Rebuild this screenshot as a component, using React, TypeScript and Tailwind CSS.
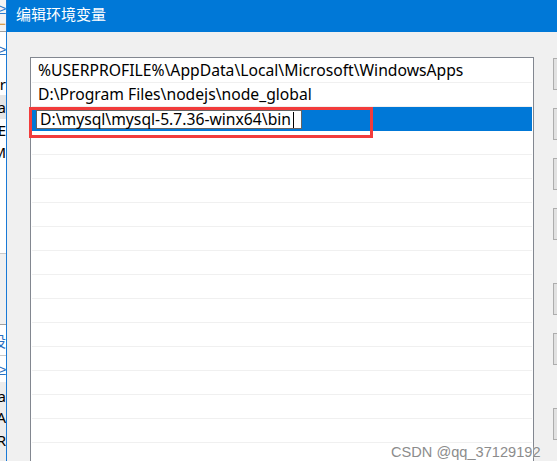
import React from 'react';

const rows = [
  '%USERPROFILE%\\AppData\\Local\\Microsoft\\WindowsApps',
  'D:\\Program Files\\nodejs\\node_global',
];

const emptyRows = Array.from({ length: 14 });

function LeftEdge() {
  // slice of the window behind the dialog
  return (
    <div className="w-[6px] shrink-0 overflow-hidden flex flex-col bg-white text-[15px] leading-none font-['Noto_Sans',sans-serif] text-black">
      <div className="h-[31px] bg-[#f3f3f3] flex flex-col justify-center items-end">
        <span className="text-[#2a7bd0] whitespace-nowrap">≥</span>
        <span className="text-[#d8901c] whitespace-nowrap">⌐</span>
      </div>
      <div className="h-[1px] bg-[#a0a0a0]" />
      <div className="h-[10px]" />
      <div className="h-[14px] flex justify-end items-center text-[#2a6fc0]">
        <span className="whitespace-nowrap">≥</span>
      </div>
      <div className="h-[17px]" />
      <div className="h-[22px] flex justify-end items-center">
        <span className="whitespace-nowrap">Ter</span>
      </div>
      <div className="h-[24px] bg-[#e5e5e5] flex justify-end items-center">
        <span className="whitespace-nowrap">Da</span>
      </div>
      <div className="h-[22px] flex justify-end items-center">
        <span className="whitespace-nowrap">PE</span>
      </div>
      <div className="h-[22px] flex justify-end items-center">
        <span className="whitespace-nowrap">FM</span>
      </div>
      <div className="h-[90px]" />
      <div className="h-[1px] bg-[#c8c8c8]" />
      <div className="h-[70px] bg-[#f0f0f0]" />
      <div className="h-[1px] bg-[#a0a0a0]" />
      <div className="h-[30px] flex justify-end items-center text-[#2a6fc0] font-['Noto_Sans_CJK_SC',sans-serif]">
        <span className="whitespace-nowrap">设</span>
      </div>
      <div className="h-[1px] bg-[#c8c8c8]" />
      <div className="h-[26px] flex justify-end items-center text-[#2a6fc0]">
        <span className="whitespace-nowrap">≥</span>
      </div>
      <div className="flex-1 bg-[#ececec] flex flex-col pt-[4px]">
        <div className="h-[20px] flex justify-end items-center">
          <span className="whitespace-nowrap">Da</span>
        </div>
        <div className="h-[22px] flex justify-end items-center">
          <span className="whitespace-nowrap">AA</span>
        </div>
        <div className="h-[24px] flex justify-end items-center">
          <span className="whitespace-nowrap">DR</span>
        </div>
      </div>
    </div>
  );
}

function SideButton({ top }: { top: string }) {
  return <div className={`${top} h-[32px] w-[80px] shrink-0 border border-[#adadad] bg-[#e1e1e1]`} />;
}

export default function App() {
  return (
    <div className="relative w-[557px] h-[461px] overflow-hidden flex bg-[#f0f0f0] font-['Noto_Sans','Noto_Sans_CJK_SC',sans-serif]">
      <LeftEdge />
      <div className="w-[1px] shrink-0 bg-[#1979d6]" />

      <div className="flex-1 min-w-0 flex flex-col">
        <div className="h-[32px] shrink-0 bg-[#0078d7] pl-[9px] pt-[5px] text-white text-[15px] leading-[18px] font-['Noto_Sans_CJK_SC',sans-serif]">
          编辑环境变量
        </div>

        <div className="flex-1 flex pl-[23px] pt-[25px] gap-[19px]">
          <div className="relative w-[504px] shrink-0 border border-[#828790] border-b-0 bg-white px-[1px] pt-[1px] text-[15.7px] text-black">
            {rows.map((r) => (
              <div key={r} className="h-[24px] border-b border-[#f0f0f0] pl-[6px] flex items-center whitespace-nowrap">
                {r}
              </div>
            ))}
            <div className="h-[24px] bg-[#0078d7] pl-[4px] pt-[3px]">
              <div className="w-[266px] h-[19px] border border-[#646464] bg-white pl-[3px] flex items-center whitespace-nowrap leading-none">
                <span>D:\mysql\mysql-5.7.36-winx64\bin</span>
                <span className="ml-[2px] w-[1px] h-[16px] bg-black" />
              </div>
            </div>
            {emptyRows.map((_, i) => (
              <div key={i} className="h-[24px] border-b border-[#f0f0f0]" />
            ))}

            <div className="absolute left-[-2px] top-[49px] w-[344px] h-[31px] border-[3px] border-[#f23c3c]" />
          </div>

          <div className="flex flex-col">
            <SideButton top="mt-[1px]" />
            <SideButton top="mt-[18px]" />
            <SideButton top="mt-[18px]" />
            <SideButton top="mt-[18px]" />
            <SideButton top="mt-[43px]" />
            <SideButton top="mt-[18px]" />
            <SideButton top="mt-[43px]" />
          </div>
        </div>
      </div>

      <div className="absolute left-[391px] top-[443px] text-[14.6px] leading-[18px] text-[#8c8c8c] font-['Liberation_Sans',sans-serif] whitespace-nowrap [text-shadow:0_0_2px_#ffffff]">
        CSDN @qq_37129192
      </div>
    </div>
  );
}
